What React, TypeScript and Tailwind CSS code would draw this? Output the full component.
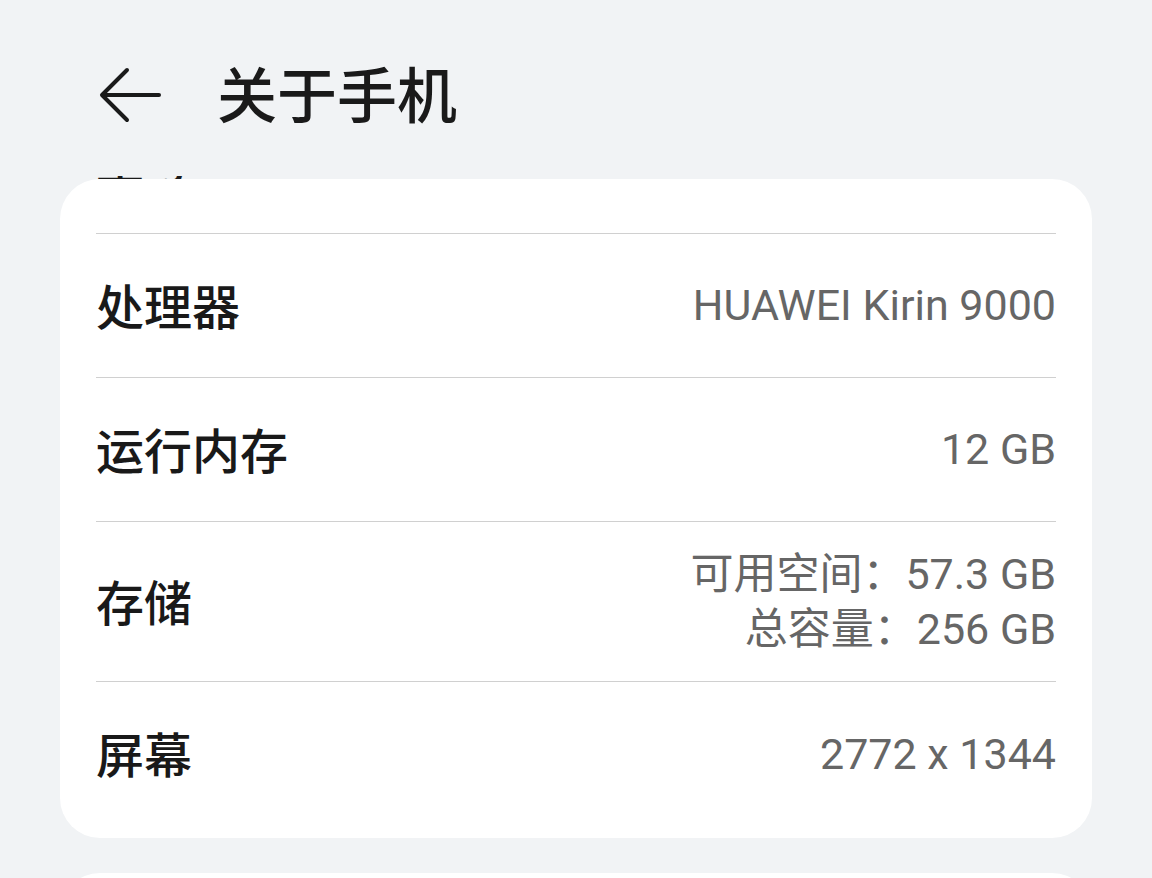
import React from 'react';

const cjk = "font-['Noto_Sans_CJK_SC',sans-serif]";
const val = "font-['Roboto','Noto_Sans_CJK_SC',sans-serif]";

const BackArrow: React.FC = () => (
  <svg width="62" height="58" viewBox="0 0 62 58" fill="none" className="shrink-0">
    <path d="M60 29H4" stroke="#1a1a1a" strokeWidth="4" strokeLinecap="round" />
    <path d="M28 4L3 29L28 54" stroke="#1a1a1a" strokeWidth="4" strokeLinecap="round" strokeLinejoin="round" />
  </svg>
);

type Row = { label: string; values: string[]; tall?: boolean };

const rows: Row[] = [
  { label: '处理器', values: ['HUAWEI Kirin 9000'] },
  { label: '运行内存', values: ['12 GB'] },
  { label: '存储', values: ['可用空间：57.3 GB', '总容量：256 GB'], tall: true },
  { label: '屏幕', values: ['2772 x 1344'] },
];

function App() {
  return (
    <div className="h-[878px] overflow-hidden bg-[#f1f3f5]">
      {/* header */}
      <div className="flex items-center h-[66px] mt-[62px] pl-[99px]">
        <BackArrow />
        <h1 className={`${cjk} ml-[56px] -mt-[6px] text-[60px] font-medium leading-none text-[#1a1a1a]`}>关于手机</h1>
      </div>

      {/* clipped tail of the row scrolled under the header */}
      <div className="mt-[48px] h-[3px] overflow-hidden pl-[96px]">
        <div className={`${cjk} -mt-[42px] text-[48px] leading-[48px] font-medium text-[#1a1a1a]`}>型号</div>
      </div>

      {/* card */}
      <div className="mx-[60px] bg-white rounded-[40px] px-[36px] pb-[12px]">
        <div className="h-[55px] border-b border-[#d0d0d0]" />
        {rows.map((r, i) => (
          <div
            key={r.label}
            className={`flex items-center justify-between ${r.tall ? 'h-[160px]' : 'h-[144px]'} ${
              i < rows.length - 1 ? 'border-b border-[#d0d0d0]' : ''
            }`}
          >
            <span className={`${cjk} -mt-[4px] text-[48px] font-medium text-[#191919] leading-none`}>{r.label}</span>
            <div className="flex flex-col items-end">
              {r.values.map((v) => (
                <span key={v} className={`${val} text-[43px] leading-[55px] text-[#666666]`}>
                  {v}
                </span>
              ))}
            </div>
          </div>
        ))}
      </div>

      {/* next card peeking in */}
      <div className="mx-[60px] mt-[35px] h-[120px] bg-white rounded-[40px]" />
    </div>
  );
}

export default App;
